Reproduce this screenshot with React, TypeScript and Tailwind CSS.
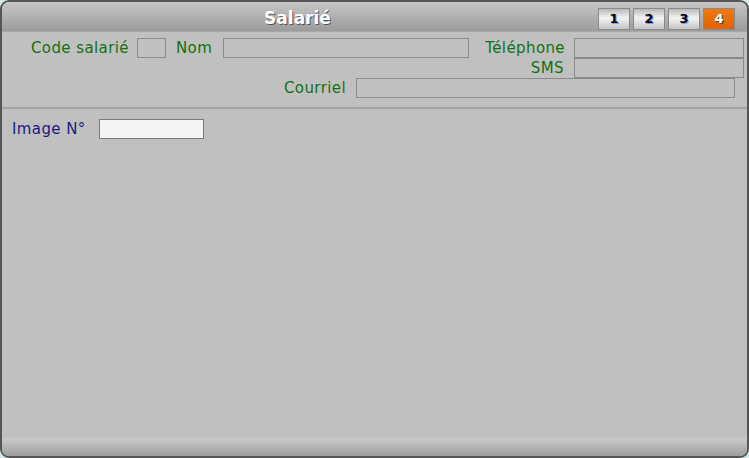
const font = { fontFamily: '"DejaVu Sans", Verdana, sans-serif' };

function TabButton({ n, active = false }: { n: number; active?: boolean }) {
    return (
        <div
            className={
                "w-[32px] h-[22px] flex items-center justify-center border text-[13px] font-bold " +
                (active
                    ? "border-[#8a8a8a] bg-[linear-gradient(#f07a10,#e06400)] text-white [text-shadow:1px_1px_0_#444]"
                    : "border-[#8a8a8a] bg-[linear-gradient(#b8b8b8,#f4f4f4_45%,#c4c4c4)] text-black [text-shadow:1px_1px_0_#7aa0ff]")
            }
        >
            {n}
        </div>
    );
}

function Field({ w, h = "h-[20px]", white = false }: { w: string; h?: string; white?: boolean }) {
    return (
        <div
            className={
                w + " " + h + " border " +
                (white ? "bg-[#f4f4f4] border-[#7a7a7a]" : "bg-[#c0c0c0] border-[#8a8a8a]")
            }
        />
    );
}

export default function App() {
    return (
        <div className="w-[749px] h-[458px] bg-[#d6e8e8]" style={font}>
            <div className="w-full h-full rounded-[9px] border-2 border-[#555] bg-[#c0c0c0] flex flex-col overflow-hidden">
                {/* HEADER */}
                <div className="h-[30px] shrink-0 bg-[linear-gradient(#c6c6c6,#9c9c9c)] border-b border-[#a8a8a8] flex items-center relative">
                    <div className="absolute left-0 right-0 top-[4px] text-center pr-[154px] text-[17px] font-bold text-white [text-shadow:1px_1px_0_#555]">
                        Salarié
                    </div>
                    <div className="ml-auto mr-[12px] flex gap-[3px] mt-[4px]">
                        <TabButton n={1} />
                        <TabButton n={2} />
                        <TabButton n={3} />
                        <TabButton n={4} active />
                    </div>
                </div>

                {/* TOP FIELDS */}
                <div className="pt-[6px] pb-[9px] border-b-2 border-[#a4a4a4] text-[15px] tracking-[0.4px] text-[#137013] flex flex-col">
                    <div className="flex items-center h-[20px]">
                        <span className="ml-[29px] w-[106px]">Code salarié</span>
                        <Field w="w-[29px]" />
                        <span className="ml-[10px] w-[47px]">Nom</span>
                        <Field w="w-[246px]" />
                        <span className="w-[105px] text-right pr-[9px]">Téléphone</span>
                        <Field w="w-[170px]" />
                    </div>
                    <div className="flex items-center h-[20px]">
                        <span className="ml-[400px] w-[172px] text-right pr-[10px]">SMS</span>
                        <Field w="w-[170px]" />
                    </div>
                    <div className="flex items-center h-[20px]">
                        <span className="w-[354px] text-right pr-[10px]">Courriel</span>
                        <Field w="w-[379px]" />
                    </div>
                </div>

                {/* BODY */}
                <div className="flex-1 pt-[9px]">
                    <div className="flex items-center text-[15px] tracking-[0.4px] text-[#1a1a84]">
                        <span className="ml-[10px] w-[87px]">Image N°</span>
                        <Field w="w-[105px]" white />
                    </div>
                </div>

                {/* FOOTER */}
                <div className="h-[18px] shrink-0 bg-[linear-gradient(#cacaca,#9e9e9e)]" />
            </div>
        </div>
    );
}
